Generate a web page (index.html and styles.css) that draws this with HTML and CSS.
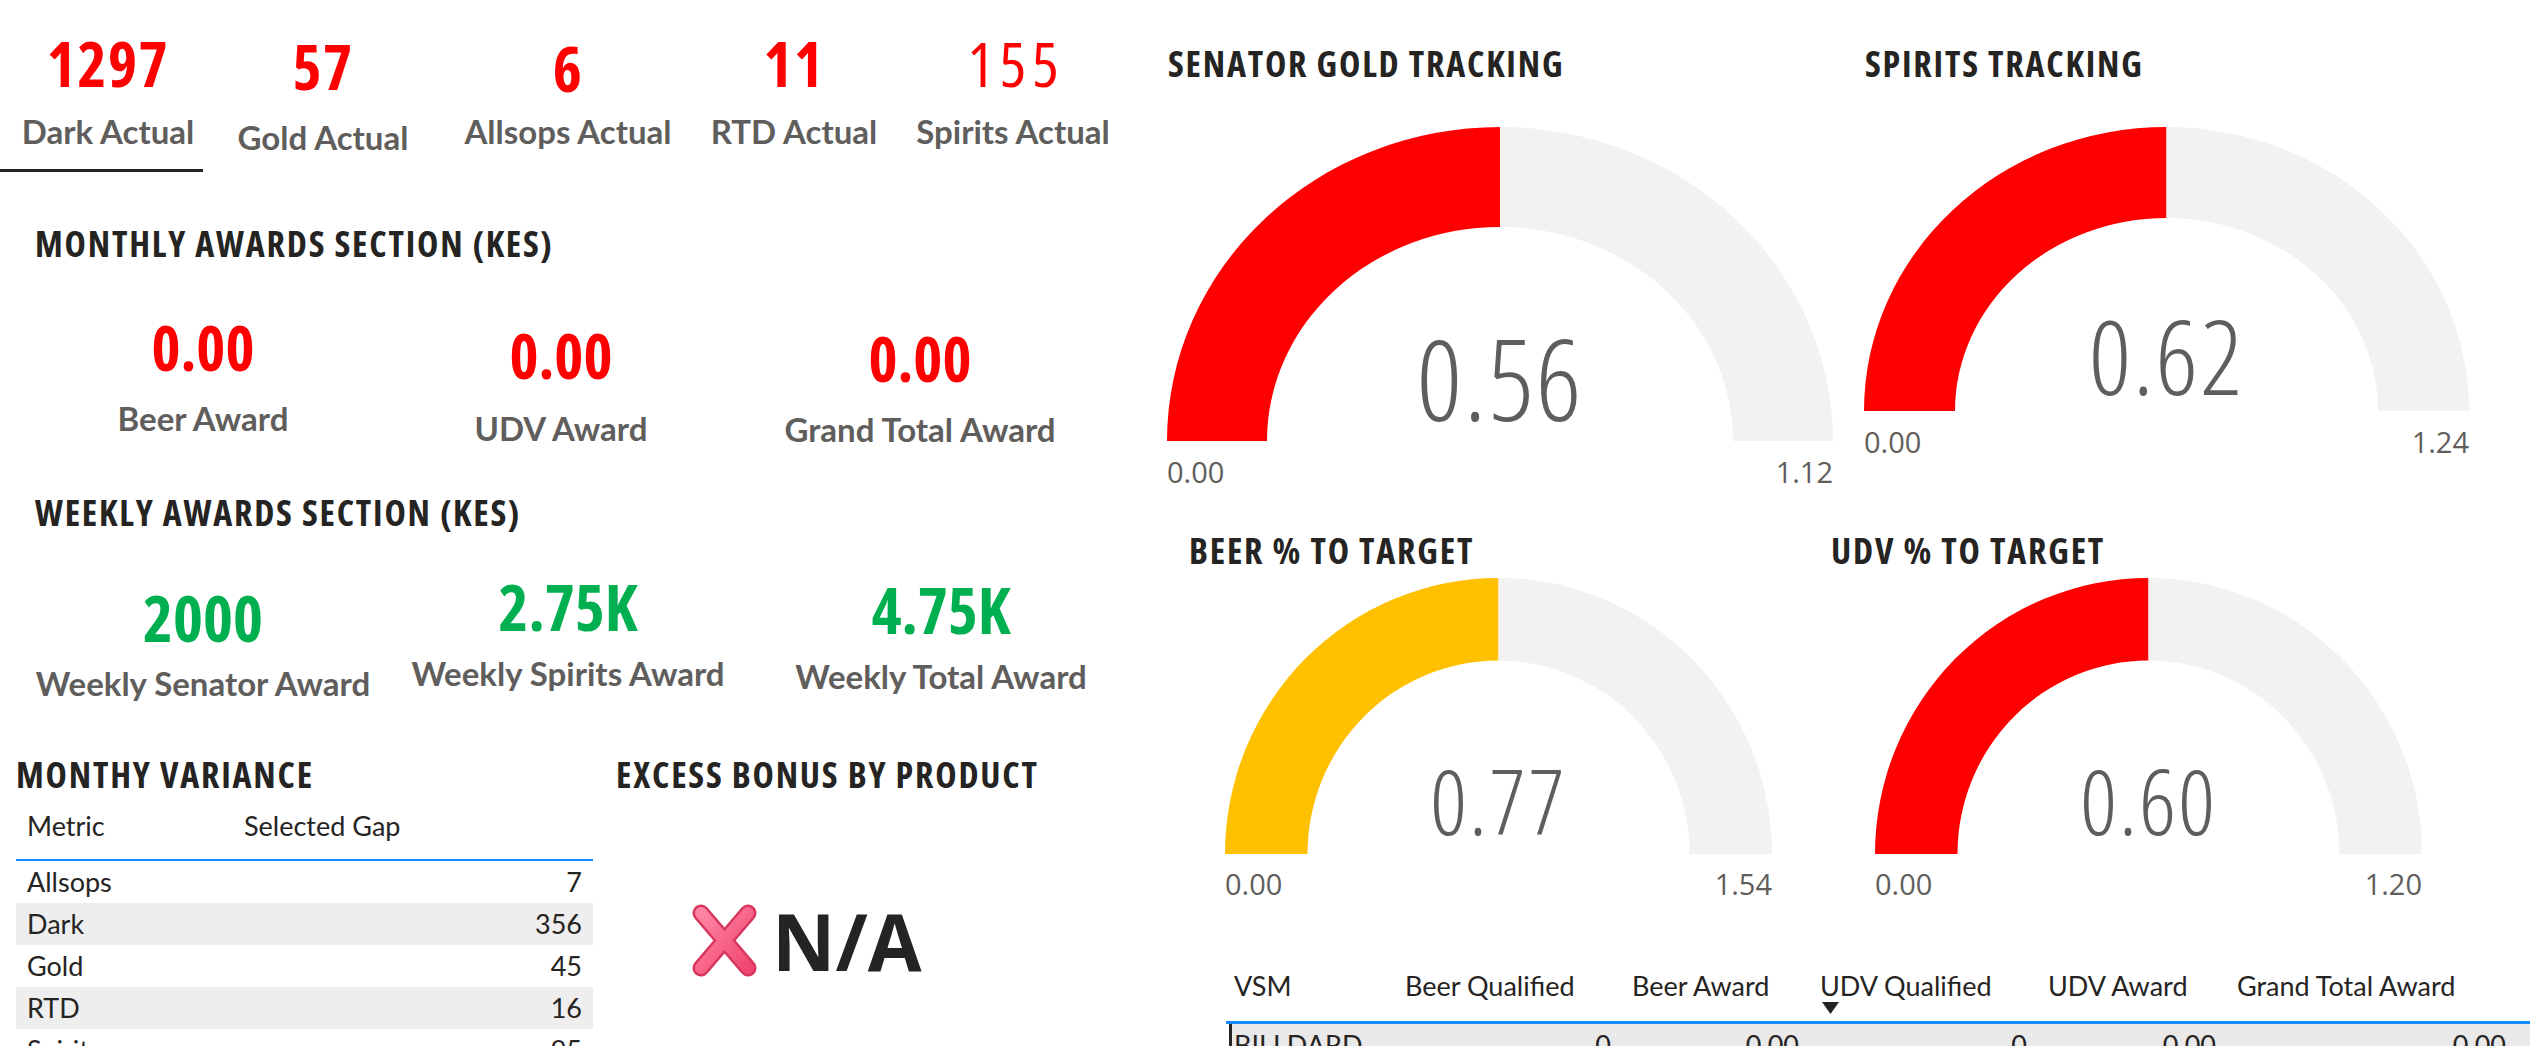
FILE: index.html
```html
<!DOCTYPE html>
<html lang="en">
<head>
<meta charset="utf-8">
<title>VSM Awards Dashboard</title>
<link rel="stylesheet" href="styles.css">
</head>
<body>
<main class="report">
  <section class="left">
    <div class="kpis">
      <div class="kpi kpi-dark">
        <div class="kpi-num">1297</div>
        <div class="kpi-label">Dark Actual</div>
        <div class="kpi-underline"></div>
      </div>
      <div class="kpi kpi-gold">
        <div class="kpi-num">57</div>
        <div class="kpi-label">Gold Actual</div>
      </div>
      <div class="kpi kpi-allsops">
        <div class="kpi-num">6</div>
        <div class="kpi-label">Allsops Actual</div>
      </div>
      <div class="kpi kpi-rtd">
        <div class="kpi-num">11</div>
        <div class="kpi-label">RTD Actual</div>
      </div>
      <div class="kpi kpi-spirits">
        <div class="kpi-num kpi-num-light">155</div>
        <div class="kpi-label">Spirits Actual</div>
      </div>
    </div>

    <h2 class="heading heading-monthly">MONTHLY AWARDS SECTION (KES)</h2>
    <div class="awards awards-monthly">
      <div class="award m1">
        <div class="award-value red">0.00</div>
        <div class="award-label">Beer Award</div>
      </div>
      <div class="award m2">
        <div class="award-value red">0.00</div>
        <div class="award-label">UDV Award</div>
      </div>
      <div class="award m3">
        <div class="award-value red">0.00</div>
        <div class="award-label">Grand Total Award</div>
      </div>
    </div>

    <h2 class="heading heading-weekly">WEEKLY AWARDS SECTION (KES)</h2>
    <div class="awards awards-weekly">
      <div class="award w1">
        <div class="award-value green">2000</div>
        <div class="award-label">Weekly Senator Award</div>
      </div>
      <div class="award w2">
        <div class="award-value green">2.75K</div>
        <div class="award-label">Weekly Spirits Award</div>
      </div>
      <div class="award w3">
        <div class="award-value green">4.75K</div>
        <div class="award-label">Weekly Total Award</div>
      </div>
    </div>

    <div class="bottom-left">
      <div class="variance">
        <h2 class="heading">MONTHY VARIANCE</h2>
        <div class="vt-head">
          <div class="vt-cell">Metric</div>
          <div class="vt-cell">Selected Gap</div>
        </div>
        <div class="vt-row"><div class="vt-cell">Allsops</div><div class="vt-cell num">7</div></div>
        <div class="vt-row alt"><div class="vt-cell">Dark</div><div class="vt-cell num">356</div></div>
        <div class="vt-row"><div class="vt-cell">Gold</div><div class="vt-cell num">45</div></div>
        <div class="vt-row alt"><div class="vt-cell">RTD</div><div class="vt-cell num">16</div></div>
        <div class="vt-row"><div class="vt-cell">Spirits</div><div class="vt-cell num">95</div></div>
      </div>
      <div class="excess">
        <h2 class="heading">EXCESS BONUS BY PRODUCT</h2>
        <div class="na">
          <svg class="na-icon" width="73" height="73" viewBox="0 0 73 73" aria-hidden="true">
            <defs>
              <linearGradient id="xg" x1="0" y1="0" x2="1" y2="1">
                <stop offset="0" stop-color="#FF86A4"/>
                <stop offset="1" stop-color="#F0466F"/>
              </linearGradient>
            </defs>
            <path d="M13 9 L60 64 M60 9 L13 64" stroke="#D8355F" stroke-width="17" stroke-linecap="round" fill="none"/>
            <path d="M13 9 L60 64 M60 9 L13 64" stroke="url(#xg)" stroke-width="12" stroke-linecap="round" fill="none"/>
          </svg>
          <span class="na-text">N/A</span>
        </div>
      </div>
    </div>
  </section>

  <section class="right">
    <div class="gauge-row gauge-row-top">
      <div class="gauge g1">
        <h2 class="heading gauge-title">SENATOR GOLD TRACKING</h2>
        <div class="dial">
          <svg width="666" height="314" viewBox="0 0 666 314" aria-hidden="true">
            <path class="arc-red" d="M0 314 A333 314 0 0 1 333 0 L333 100 A233 214 0 0 0 100 314 Z"/>
            <path class="arc-bg" d="M333 0 A333 314 0 0 1 666 314 L566 314 A233 214 0 0 0 333 100 Z"/>
          </svg>
          <div class="dial-value">0.56</div>
        </div>
        <div class="scale"><span>0.00</span><span>1.12</span></div>
      </div>
      <div class="gauge g2">
        <h2 class="heading gauge-title">SPIRITS TRACKING</h2>
        <div class="dial">
          <svg width="605" height="284" viewBox="0 0 605 284" aria-hidden="true">
            <path class="arc-red" d="M0 284 A302.5 284 0 0 1 302.5 0 L302.5 91 A211.5 193 0 0 0 91 284 Z"/>
            <path class="arc-bg" d="M302.5 0 A302.5 284 0 0 1 605 284 L514 284 A211.5 193 0 0 0 302.5 91 Z"/>
          </svg>
          <div class="dial-value">0.62</div>
        </div>
        <div class="scale"><span>0.00</span><span>1.24</span></div>
      </div>
    </div>

    <div class="gauge-row gauge-row-bottom">
      <div class="gauge g3">
        <h2 class="heading gauge-title">BEER % TO TARGET</h2>
        <div class="dial">
          <svg width="547" height="276" viewBox="0 0 547 276" aria-hidden="true">
            <path class="arc-yellow" d="M0 276 A273.5 276 0 0 1 273.5 0 L273.5 82.5 A191 193.5 0 0 0 82.5 276 Z"/>
            <path class="arc-bg" d="M273.5 0 A273.5 276 0 0 1 547 276 L464.5 276 A191 193.5 0 0 0 273.5 82.5 Z"/>
          </svg>
          <div class="dial-value">0.77</div>
        </div>
        <div class="scale"><span>0.00</span><span>1.54</span></div>
      </div>
      <div class="gauge g4">
        <h2 class="heading gauge-title">UDV % TO TARGET</h2>
        <div class="dial">
          <svg width="547" height="276" viewBox="0 0 547 276" aria-hidden="true">
            <path class="arc-red" d="M0 276 A273.5 276 0 0 1 273.5 0 L273.5 82.5 A191 193.5 0 0 0 82.5 276 Z"/>
            <path class="arc-bg" d="M273.5 0 A273.5 276 0 0 1 547 276 L464.5 276 A191 193.5 0 0 0 273.5 82.5 Z"/>
          </svg>
          <div class="dial-value">0.60</div>
        </div>
        <div class="scale"><span>0.00</span><span>1.20</span></div>
      </div>
    </div>

    <div class="vsm-table">
      <div class="vsm-head">
        <div class="vsm-cell c1">VSM</div>
        <div class="vsm-cell">Beer Qualified</div>
        <div class="vsm-cell">Beer Award</div>
        <div class="vsm-cell sorted">UDV Qualified
          <svg class="sort-arrow" width="17" height="12" viewBox="0 0 17 12" aria-hidden="true"><path d="M0 0 H17 L8.5 12 Z" fill="#252423"/></svg>
        </div>
        <div class="vsm-cell">UDV Award</div>
        <div class="vsm-cell">Grand Total Award</div>
      </div>
      <div class="vsm-row">
        <div class="vsm-cell c1">BILLDARD</div>
        <div class="vsm-cell num">0</div>
        <div class="vsm-cell num">0.00</div>
        <div class="vsm-cell num">0</div>
        <div class="vsm-cell num">0.00</div>
        <div class="vsm-cell num last">0.00</div>
      </div>
    </div>
  </section>
</main>
</body>
</html>
```

FILE: styles.css
```css
* {
  box-sizing: border-box;
  margin: 0;
  padding: 0;
}

body {
  width: 2530px;
  height: 1046px;
  overflow: hidden;
  background: #ffffff;
  color: #252423;
  font-family: "Open Sans", "Liberation Sans", sans-serif;
}

.report {
  display: grid;
  grid-template-columns: 1130px 1400px;
  height: 1046px;
}

/* ---------- shared type ---------- */
.heading,
.kpi-num,
.award-value {
  font-family: "Open Sans", "Liberation Sans", sans-serif;
  font-stretch: 75%;
  font-weight: 700;
  line-height: 1;
  white-space: nowrap;
}

.heading {
  font-size: 36px;
  letter-spacing: 1.8px;
  color: #252423;
}

.kpi-label,
.award-label {
  font-family: "Lato", "Open Sans", sans-serif;
  font-size: 33px;
  font-weight: 700;
  line-height: 1.4;
  color: #605e5c;
  white-space: nowrap;
}

/* ---------- left column ---------- */
.left {
  display: flex;
  flex-direction: column;
}

.kpis {
  display: flex;
  align-items: flex-start;
}

.kpi {
  flex: none;
  display: flex;
  flex-direction: column;
  align-items: center;
  padding-top: 32px;
}

.kpi-dark { width: 216px; }
.kpi-gold { width: 214px; padding-top: 35px; }
.kpi-allsops { width: 276px; padding-top: 37px; }
.kpi-rtd { width: 176px; }
.kpi-spirits { width: 262px; }

.kpi-num {
  font-size: 62px;
  letter-spacing: 1.5px;
  color: #ff0000;
}

.kpi-num-light {
  font-weight: 400;
  letter-spacing: 6px;
  margin-right: -6px;
}

.kpi-label { margin-top: 14px; }
.kpi-gold .kpi-label { margin-top: 17px; }
.kpi-allsops .kpi-label { margin-top: 9px; }

.kpi-underline {
  align-self: flex-start;
  width: 203px;
  height: 3px;
  margin-top: 15px;
  background: #252423;
}

.heading-monthly { margin: 54px 0 0 35px; }
.heading-weekly { margin: 43px 0 0 35px; }

.awards {
  display: grid;
  align-items: start;
}

.awards-monthly { grid-template-columns: 406px 310px 408px; }
.awards-weekly { grid-template-columns: 406px 324px 422px; }

.award {
  display: flex;
  flex-direction: column;
  align-items: center;
}

.award-value { font-size: 62px; }
.awards-weekly .award-value { font-size: 64px; }

.award-value.red { color: #ff0000; }
.award-value.green { color: #00b050; }

.m1 { padding-top: 54px; }
.m1 .award-label { margin-top: 17px; }
.m2 { padding-top: 62px; }
.m2 .award-label { margin-top: 19px; }
.m3 { padding-top: 65px; }
.m3 .award-label { margin-top: 17px; }

.w1 { padding-top: 55px; }
.w1 .award-label { margin-top: 10px; }
.w2 { padding-top: 44px; }
.w2 .award-label { margin-top: 11px; }
.w3 { padding-top: 47px; }
.w3 .award-label { margin-top: 11px; }

.bottom-left {
  display: grid;
  grid-template-columns: 577px 1fr;
  column-gap: 23px;
  padding-left: 16px;
  margin-top: 50px;
}

.vt-head,
.vt-row {
  display: grid;
  grid-template-columns: 217px 1fr;
  font-family: "Lato", "Open Sans", sans-serif;
  font-size: 27px;
  color: #252423;
}

.vt-head {
  padding: 19px 0 20px;
  line-height: 1;
  border-bottom: 2px solid #118dff;
}

.vt-row {
  height: 42px;
  line-height: 42px;
}

.vt-row.alt { background: #eeeeee; }

.vt-cell {
  padding: 0 11px;
  white-space: nowrap;
}

.vt-cell.num { text-align: right; }

.na {
  display: flex;
  align-items: center;
  gap: 11px;
  margin: 109px 0 0 72px;
}

.na-icon { display: block; flex: none; }

.na-text {
  font-size: 78px;
  font-weight: 700;
  line-height: 1;
  color: #252423;
}

/* ---------- right column ---------- */
.right {
  display: flex;
  flex-direction: column;
}

.gauge-row {
  display: flex;
  align-items: flex-start;
}

.gauge-row-top {
  padding: 46px 0 0 37px;
  gap: 31px;
}

.gauge-row-bottom {
  margin-top: 47px;
  padding-left: 58px;
  gap: 58px;
}

.gauge {
  flex: none;
  display: flex;
  flex-direction: column;
  align-items: flex-start;
}

.gauge-title {
  padding-left: 1px;
}

.dial {
  position: relative;
}

.dial svg { display: block; }

.arc-red { fill: #ff0000; }
.arc-yellow { fill: #ffc000; }
.arc-bg { fill: #f3f2f1; }

.dial-value {
  position: absolute;
  left: 0;
  right: 0;
  text-align: center;
  font-family: "Open Sans", sans-serif;
  font-stretch: 75%;
  font-weight: 300;
  letter-spacing: 2px;
  line-height: 1;
  color: #605e5c;
}

.scale {
  display: flex;
  justify-content: space-between;
  font-size: 29px;
  line-height: 1;
  color: #605e5c;
}

.g1 .dial { margin-top: 45px; }
.g1 .dial-value { top: 195px; font-size: 112px; }
.g1 .scale { width: 666px; margin-top: 16px; }

.g2 .dial { margin-top: 45px; }
.g2 .dial-value { top: 176px; font-size: 104px; }
.g2 .scale { width: 605px; margin-top: 16px; }

.g3 .dial { margin: 9px 0 0 37px; }
.g3 .dial-value { top: 177px; font-size: 91px; }
.g3 .scale { width: 547px; margin: 15px 0 0 37px; }

.g4 .dial { margin: 9px 0 0 45px; }
.g4 .dial-value { top: 177px; font-size: 91px; }
.g4 .scale { width: 547px; margin: 15px 0 0 45px; }

.vsm-table {
  margin: 74px 0 0 96px;
  font-family: "Lato", "Open Sans", sans-serif;
  font-size: 27px;
  color: #252423;
}

.vsm-head {
  display: grid;
  grid-template-columns: 169px 227px 188px 228px 189px 1fr;
  height: 52px;
  line-height: 1;
  border-bottom: 3px solid #118dff;
}

.vsm-row {
  display: grid;
  grid-template-columns: 163px 227px 188px 228px 189px 1fr;
  height: 42px;
  line-height: 42px;
  margin-left: 3px;
  border-left: 3px solid #252423;
  background: #e9e9e9;
}

.vsm-cell {
  padding: 0 11px 0 10px;
  white-space: nowrap;
}

.vsm-head .c1 { padding-left: 8px; }
.vsm-row .c1 { padding-left: 2px; }

.vsm-cell.num { text-align: right; }
.vsm-cell.last { padding-right: 24px; }

.sorted {
  display: flex;
  flex-direction: column;
  align-items: flex-start;
}

.sort-arrow {
  display: block;
  margin: 3px 0 0 2px;
}
```
